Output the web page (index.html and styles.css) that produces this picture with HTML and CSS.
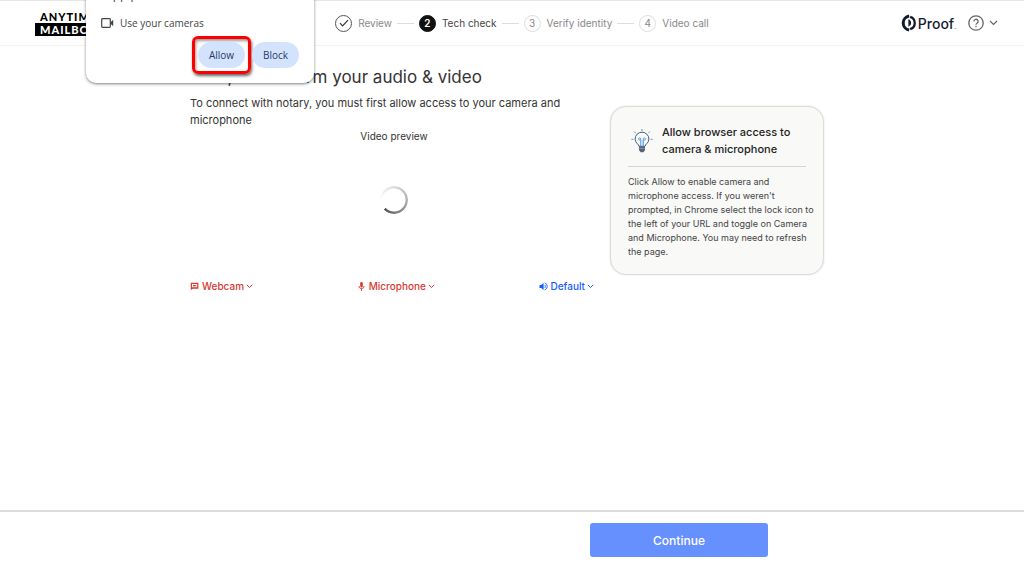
FILE: index.html
```html
<!DOCTYPE html>
<html lang="en">

<head>
    <meta charset="UTF-8">
    <meta name="viewport" content="width=device-width, initial-scale=1.0">
    <title>Tech check</title>
    <link rel="stylesheet" href="styles.css">
</head>

<body>
    <!-- Header -->
    <header class="header">
        <div class="brand">
            <span class="brand-top">ANYTIME</span>
            <span class="brand-bottom">MAILBOX</span>
        </div>

        <ol class="steps">
            <li class="step done">
                <span class="step-icon">
                    <svg width="10" height="8" viewBox="0 0 10 8"><path d="M1 4.2 3.6 6.8 9 1.2" fill="none" stroke="currentColor" stroke-width="1.2"/></svg>
                </span>
                Review
            </li>
            <li class="step current"><span class="step-icon">2</span>Tech check</li>
            <li class="step"><span class="step-icon">3</span>Verify identity</li>
            <li class="step"><span class="step-icon">4</span>Video call</li>
        </ol>

        <div class="header-right">
            <div class="proof">
                <svg width="15" height="18" viewBox="0 0 15 18">
                    <path d="M8.2 1.9a7.2 7.2 0 0 0 0 14.2" fill="none" stroke="#141a2e" stroke-width="3"/>
                    <path d="M9.2 2.8a6.5 6.5 0 0 1 0 12.4" fill="none" stroke="#141a2e" stroke-width="2.3"/>
                    <path d="M7.4 5.2v7.6a4 4 0 0 0 0-7.6z" fill="#141a2e"/>
                </svg>
                <span class="proof-name">Proof</span><span class="proof-mark">™</span>
            </div>
            <button class="help-btn" aria-label="Help">
                <svg width="16" height="16" viewBox="0 0 16 16" fill="none" stroke="#666" stroke-width="1.3">
                    <circle cx="8" cy="8" r="7.2"/>
                    <path d="M5.9 6.4a2.1 2.1 0 1 1 3.1 1.8c-.7.4-1 .7-1 1.5"/>
                    <path d="M8 10.8v1.4"/>
                </svg>
                <svg width="9" height="6" viewBox="0 0 9 6" fill="none" stroke="#666" stroke-width="1.2"><path d="M1 1l3.5 3.5L8 1"/></svg>
            </button>
        </div>
    </header>

    <!-- Tech check -->
    <main class="content">
        <section class="check">
            <h1>Next, we confirm your audio &amp; video</h1>
            <p class="intro">To connect with notary, you must first allow access to your camera and microphone</p>
            <p class="preview-label">Video preview</p>
            <div class="preview"><div class="spinner"></div></div>
            <div class="devices">
                <button class="device error">
                    <svg width="9" height="9" viewBox="0 0 9 9"><path d="M.8.8h7.6v5.9H2.6L.8 8.3z M2 2.1v3.2h5.2V2.1z" fill="currentColor" fill-rule="evenodd"/><path d="M3 3h2.2v1.4H3z M5 3.7l1.3-.8v1.6z" fill="currentColor"/></svg>
                    Webcam
                    <svg class="caret" width="7" height="5" viewBox="0 0 7 5"><path d="M.8.8l2.7 2.7L6.2.8" fill="none" stroke="currentColor"/></svg>
                </button>
                <button class="device error">
                    <svg width="9" height="9" viewBox="0 0 9 9"><rect x="3.2" y="0" width="2.6" height="5.4" rx="1.3" fill="currentColor"/><path d="M1.9 4a2.6 2.6 0 0 0 5.2 0M4.5 6.6V9" fill="none" stroke="currentColor" stroke-width=".9"/></svg>
                    Microphone
                    <svg class="caret" width="7" height="5" viewBox="0 0 7 5"><path d="M.8.8l2.7 2.7L6.2.8" fill="none" stroke="currentColor"/></svg>
                </button>
                <button class="device">
                    <svg width="9" height="9" viewBox="0 0 9 9"><path d="M.5 3h1.7L4.6.9v7.2L2.2 6H.5z" fill="currentColor"/><path d="M5.6 3a1.8 1.8 0 0 1 0 3M5.6 1.1a3.5 3.5 0 0 1 0 6.8" fill="none" stroke="currentColor" stroke-width=".9"/></svg>
                    Default
                    <svg class="caret" width="7" height="5" viewBox="0 0 7 5"><path d="M.8.8l2.7 2.7L6.2.8" fill="none" stroke="currentColor"/></svg>
                </button>
            </div>
        </section>

        <aside class="tip">
            <div class="tip-head">
                <svg width="24" height="24" viewBox="0 0 24 24" fill="none">
                    <path d="M9 17.3c0-2.1-3.9-3.1-3.9-7.2a6.9 6.9 0 0 1 13.8 0c0 4.1-3.9 5.1-3.9 7.2z" stroke="#4a5a75"/>
                    <path d="M9 17.5h6v3.6l-1.6 2.2h-2.8L9 21.1z" fill="#53627c"/>
                    <path d="M9.2 19.4h5.6" stroke="#a9b3c4" stroke-width=".6"/>
                    <path d="M10.8 17v-6.2M13.2 17v-6.2" stroke="#4a9be8" stroke-width="1.1"/>
                    <circle cx="9.7" cy="10" r="1.1" stroke="#4a9be8" stroke-width=".9"/>
                    <circle cx="14.3" cy="10" r="1.1" stroke="#4a9be8" stroke-width=".9"/>
                    <path d="M12 0v2M4.2 2.6l1.5 1.5M19.8 2.6l-1.5 1.5M1.4 10.3h2M20.6 10.3h2" stroke="#4a9be8"/>
                </svg>
                <h2>Allow browser access to camera &amp; microphone</h2>
            </div>
            <p>Click Allow to enable camera and microphone access. If you weren't prompted, in Chrome select the lock icon to the left of your URL and toggle on Camera and Microphone. You may need to refresh the page.</p>
        </aside>
    </main>

    <!-- Footer -->
    <footer class="footer">
        <button class="continue-btn">Continue</button>
    </footer>

    <!-- Browser permission prompt -->
    <div class="prompt">
        <div class="prompt-site">app.proof.com wants to</div>
        <div class="prompt-item">
            <svg width="13" height="10" viewBox="0 0 13 10"><rect x=".7" y=".7" width="8.6" height="8.6" rx=".8" fill="none" stroke="#444" stroke-width="1.2"/><path d="M9.6 4.2l2.6-2.4v6.4L9.6 5.8z" fill="#444"/></svg>
            Use your cameras
        </div>
        <div class="prompt-actions">
            <span class="highlight"><button class="prompt-btn">Allow</button></span>
            <button class="prompt-btn">Block</button>
        </div>
    </div>
</body>

</html>
```
FILE: styles.css
```css
* {
    box-sizing: border-box;
}

body {
    font-family: Inter, "Liberation Sans", sans-serif;
    margin: 0;
    min-height: 100vh;
    display: flex;
    flex-direction: column;
    background-color: #fff;
    color: #333;
}

h1, h2, p, ol {
    margin: 0;
    padding: 0;
    font-weight: 400;
}

button {
    font-family: inherit;
    border: none;
    padding: 0;
    background: none;
    cursor: pointer;
}

svg {
    flex: none;
}

.header {
    display: flex;
    align-items: center;
    justify-content: space-between;
    height: 46px;
    padding: 0 26px 0 35px;
    border-top: 1px solid #e6e6e6;
    border-bottom: 1px solid #f3f3f3;
}

.brand {
    width: 108px;
    display: flex;
    flex-direction: column;
    align-items: flex-start;
    font-family: Lato, sans-serif;
    font-size: 11px;
    font-weight: 900;
    line-height: 13px;
    letter-spacing: 1px;
    color: #000;
}

.brand-top {
    padding-left: 5px;
}

.brand-bottom {
    padding: 0 5px;
    background-color: #000;
    color: #fff;
}

.steps {
    display: flex;
    list-style: none;
    font-size: 10px;
    color: #888;
}

.step {
    display: flex;
    align-items: center;
}

.step + .step::before {
    content: "";
    width: 17px;
    height: 1px;
    margin: 0 5px;
    background-color: #ddd;
}

.step-icon {
    display: flex;
    align-items: center;
    justify-content: center;
    width: 17px;
    height: 17px;
    margin-right: 6px;
    border: 1px solid #ddd;
    border-radius: 50%;
}

.done .step-icon {
    border-color: #555;
    color: #333;
}

.current {
    color: #444;
}

.current .step-icon {
    background-color: #111;
    border-color: #111;
    color: #fff;
    font-weight: 600;
}

.header-right {
    display: flex;
    align-items: center;
    gap: 12px;
}

.proof {
    display: flex;
    align-items: center;
    color: #141a2e;
}

.proof-name {
    margin-left: 2px;
    font-size: 14px;
    font-weight: 500;
}

.proof-mark {
    align-self: flex-end;
    font-size: 3px;
}

.help-btn {
    display: flex;
    align-items: center;
    gap: 5px;
}

.content {
    flex: 1;
    display: flex;
    align-items: flex-start;
    justify-content: center;
    gap: 12px;
    padding: 19px 10px 0 0;
}

.check {
    width: 408px;
}

.check h1 {
    font-size: 17px;
    line-height: 24px;
}

.intro {
    margin-top: 6px;
    font-size: 11px;
    line-height: 17px;
}

.preview-label {
    font-size: 10px;
    line-height: 14px;
    text-align: center;
}

.preview {
    display: flex;
    align-items: center;
    justify-content: center;
    height: 114px;
}

.spinner {
    width: 28px;
    height: 28px;
    border-radius: 50%;
    background: conic-gradient(#ddd 0deg, #aaa 100deg, #555 225deg, transparent 226deg, transparent 270deg, #ddd 360deg);
    -webkit-mask: radial-gradient(circle, transparent 11px, #000 12px);
    mask: radial-gradient(circle, transparent 11px, #000 12px);
}

.devices {
    display: flex;
    justify-content: space-between;
    margin-top: 21px;
    padding: 0 4px 0 0;
}

.device {
    display: flex;
    align-items: center;
    gap: 3px;
    font-size: 10px;
    font-weight: 500;
    line-height: 16px;
    color: #1a5cff;
}

.device.error {
    color: #d63a2f;
}

.caret {
    margin-left: -1px;
}

.tip {
    width: 214px;
    margin-top: 41px;
    padding: 17px 17px 15px;
    border: 1px solid #dcdcd8;
    border-radius: 16px;
    background-color: #f9f9f8;
    box-shadow: 0 0 2px #ddd;
}

.tip-head {
    display: flex;
    align-items: center;
    gap: 8px;
    padding: 0 0 8px 2px;
    border-bottom: 1px solid #d5d5d1;
}

.tip h2 {
    font-size: 11px;
    font-weight: 500;
    line-height: 17px;
    color: #222;
}

.tip p {
    margin: 8px -10px 0 0;
    font-size: 9px;
    line-height: 14px;
    color: #444;
}

.footer {
    display: flex;
    justify-content: flex-end;
    padding: 11px 25% 11px 0;
    border-top: 2px solid #dcdcd8;
}

.continue-btn {
    width: 178px;
    height: 34px;
    border-radius: 3px;
    background-color: #6690fd;
    color: #fff;
    font-size: 12px;
    font-weight: 500;
}

/* Drops down from the browser toolbar, over the page */
.prompt {
    position: absolute;
    top: -12px;
    left: 86px;
    width: 228px;
    padding: 0 15px 9px;
    border-radius: 0 0 10px 10px;
    background-color: #fff;
    box-shadow: 0 1px 3px rgba(0, 0, 0, 0.5);
    font-family: "Open Sans", sans-serif;
    color: #444;
}

.prompt-site {
    padding-left: 5px;
    font-size: 12px;
    line-height: 14px;
}

.prompt-item {
    display: flex;
    align-items: center;
    gap: 6px;
    margin-top: 13px;
    font-size: 10px;
    line-height: 16px;
}

.prompt-actions {
    display: flex;
    align-items: center;
    justify-content: flex-end;
    gap: 1px;
    margin-top: 5px;
}

.highlight {
    display: flex;
    padding: 3px;
    border: 3px solid #f00;
    border-radius: 6px;
    box-shadow: 1px 2px 3px rgba(0, 0, 0, 0.6), inset 1px 2px 3px rgba(0, 0, 0, 0.4);
}

.prompt-btn {
    width: 47px;
    height: 26px;
    border-radius: 13px;
    background-color: #d3e3fd;
    color: #1f3a68;
    font-size: 10px;
    font-weight: 500;
}
```
